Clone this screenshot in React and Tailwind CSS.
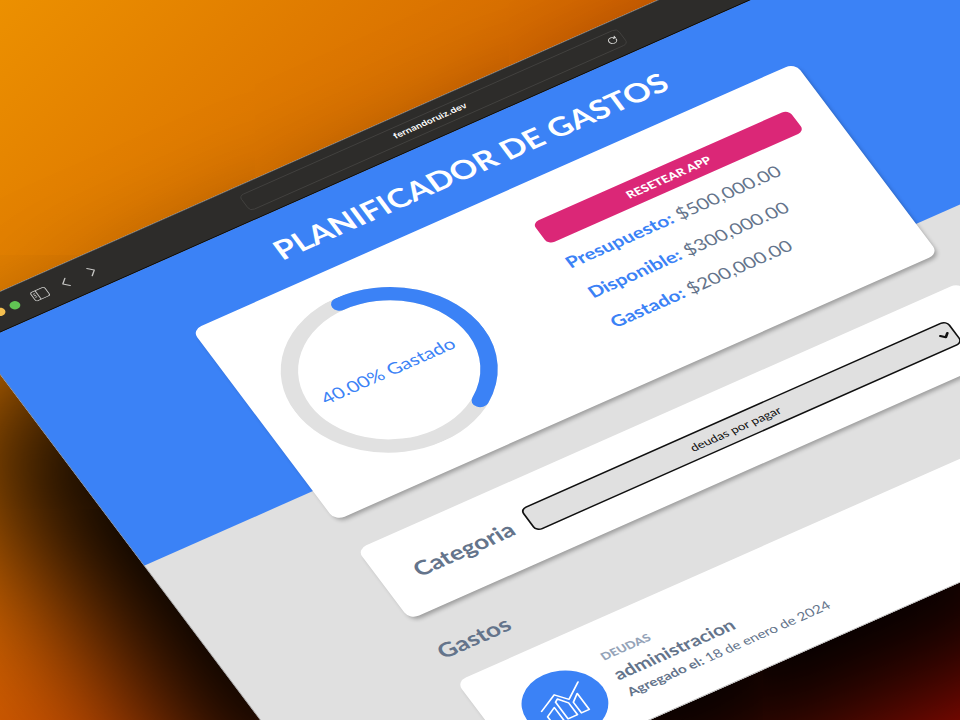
import { ChevronDown, RotateCw } from "lucide-react";

function Toolbar() {
  return (
    <div className="relative flex h-[52px] items-center border-b border-black bg-[#2d2c2a] pl-5">
      <div className="flex items-center gap-[7px]">
        <span className="size-3 rounded-full bg-[#ec6a5e]" />
        <span className="size-3 rounded-full bg-[#f4bf4f]" />
        <span className="size-3 rounded-full bg-[#61c554]" />
      </div>
      <button type="button" aria-label="Barra lateral" className="ml-4 text-[#c4c4c2]">
        <svg width="20" height="16" viewBox="0 0 20 16" fill="none" stroke="currentColor" strokeWidth="1.2">
          <rect x="1" y="1" width="18" height="14" rx="2.5" />
          <path d="M7.5 1v14M3 4.5h2.5M3 7h2.5M3 9.500h2.500" />
        </svg>
      </button>
      <button type="button" aria-label="Anterior" className="ml-4 text-[#c4c4c2]">
        <svg width="16" height="16" viewBox="0 0 16 16" fill="none" stroke="currentColor" strokeWidth="1.5" strokeLinecap="round" strokeLinejoin="round">
          <path d="M9 2L3 8l6 6" />
        </svg>
      </button>
      <button type="button" aria-label="Siguiente" className="ml-4 text-[#c4c4c2]">
        <svg width="16" height="16" viewBox="0 0 16 16" fill="none" stroke="currentColor" strokeWidth="1.5" strokeLinecap="round" strokeLinejoin="round">
          <path d="M5 2l6 6l-6 6" />
        </svg>
      </button>
      <div className="absolute inset-0 flex items-center justify-center pr-1">
        <div className="relative flex h-[26px] w-[482px] items-center justify-center rounded-md border border-[#454442] pr-2 font-['Inter',sans-serif] text-[11px] font-semibold text-white">
          fernandoruiz.dev
          <button type="button" aria-label="Recargar" className="absolute right-[6px] text-[#d4d4d2]">
            <RotateCw size={12} strokeWidth={2.5} />
          </button>
        </div>
      </div>
    </div>
  );
}

function ProgressRing() {
  return (
    <div className="relative size-60">
      <svg viewBox="0 0 100 100" className="size-full" fill="none" strokeWidth="8" strokeLinecap="round">
        <circle cx="50" cy="50" r="46" stroke="#e1e1e1" />
        <circle
          cx="50"
          cy="50"
          r="46"
          stroke="#3b82f6"
          pathLength="100"
          strokeDasharray="40 100"
          transform="rotate(-90 50 50)"
        />
      </svg>
      <p className="absolute inset-0 flex items-center justify-center pr-1 text-[23px] text-[#3b82f6]">40.00% Gastado</p>
    </div>
  );
}

function Amount({ label, value }) {
  return (
    <p>
      <span className="font-bold text-[#3b82f6]">{label}:</span> {value}
    </p>
  );
}

function DebtIcon() {
  return (
    <div className="flex size-24 shrink-0 items-center justify-center rounded-full bg-[#3b82f6]">
      <svg width="64" height="64" viewBox="-32 -32 64 64" fill="none" stroke="#fff" strokeWidth="2" strokeLinejoin="round" strokeLinecap="round">
        <path d="M-28 -3L-4 -17L7 -3L28 -20" />
        <path d="M-26 21V7L-13 -1V21Z" />
        <path d="M-8 21V-7L-4 -10L4 1V21Z" />
        <path d="M9 21V3L19 -6V21Z" />
      </svg>
    </div>
  );
}

function Planner() {
  return (
    <div className="text-[#64748b]">
      <header className="flow-root bg-[#3b82f6]">
        <h1 className="py-8 text-center text-[38px] leading-10 font-bold text-white uppercase">Planificador de gastos</h1>
        <section className="relative mx-auto -mb-[50px] grid max-w-3xl grid-cols-2 items-center gap-9 rounded-xl bg-white p-10 shadow-[1px_5px_5px_-1px_rgba(0,0,0,0.3)]">
          <ProgressRing />
          <div className="pb-6">
            <button type="button" className="w-full rounded-lg bg-[#db2777] p-2 text-[15px] leading-5 font-black text-white uppercase">
              Resetear app
            </button>
            <div className="mt-[18px] flex flex-col gap-[18px] pl-1 text-[23px] leading-8">
              <Amount label="Presupuesto" value="$500,000.00" />
              <Amount label="Disponible" value="$300,000.00" />
              <Amount label="Gastado" value="$200,000.00" />
            </div>
          </div>
        </section>
      </header>
      <main className="mx-auto max-w-3xl pt-[98px]">
        <form className="flex items-center gap-5 rounded-xl bg-white p-10 shadow-[1px_5px_5px_-1px_rgba(0,0,0,0.3)]">
          <label htmlFor="categoria" className="text-[29px] leading-9 font-bold">
            Categoria
          </label>
          <div className="relative flex-1">
            <select
              id="categoria"
              className="block h-[38px] w-full appearance-none rounded-lg border-2 border-[#101010] bg-[#e0e0e0] pr-4 text-center text-[15px] text-[#101010]"
            >
              <option>deudas por pagar</option>
            </select>
            <ChevronDown
              size={18}
              strokeWidth={4}
              className="pointer-events-none absolute top-[10px] right-1 text-[#101010]"
            />
          </div>
        </form>
        <h2 className="mt-10 pl-1 text-[29px] leading-9 font-bold">Gastos</h2>
        <article className="mt-7 flex items-start gap-5 rounded-xl bg-white p-10 shadow-[1px_5px_5px_-1px_rgba(0,0,0,0.3)]">
          <DebtIcon />
          <div>
            <p className="text-[15px] leading-5 font-black text-[#94a3b8] uppercase">Deudas</p>
            <h3 className="mt-1 text-[23px] leading-8 font-bold">administracion</h3>
            <p className="text-[17px] leading-7">
              <span className="font-bold">Agregado el:</span> 18 de enero de 2024
            </p>
          </div>
        </article>
      </main>
    </div>
  );
}

export default function App() {
  return (
    <div className="relative h-screen overflow-hidden bg-linear-[135deg,#ec9000_0%,#d97000_30%,#c84c00_50%,#b80c00_100%] font-['Lato',sans-serif]">
      <div className="absolute top-0 left-0 h-[902px] w-[1198px] origin-top-left [transform:matrix(0.7854,-0.3479,0.4484,0.5959,-47,312)] overflow-hidden rounded-xl bg-[#e0e0e0] shadow-[-90px_140px_180px_10px_#000]">
        <Toolbar />
        <Planner />
        <div className="pointer-events-none absolute inset-0 rounded-xl border border-[#8a8a8a]/70" />
      </div>
    </div>
  );
}
